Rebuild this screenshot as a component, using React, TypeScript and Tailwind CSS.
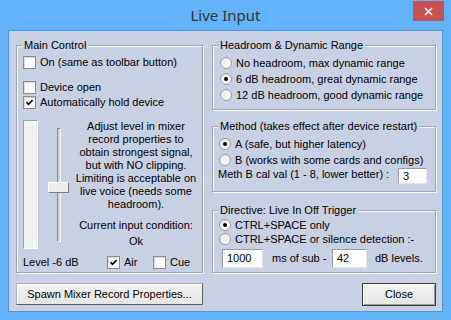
import { type ReactNode } from 'react';

function Check({ checked }: { checked?: boolean }) {
    return (
        <span className="flex h-[13px] w-[13px] shrink-0 items-center justify-center border border-[#8a8a8a] bg-white shadow-[inset_1px_1px_0_#dcdcdc]">
            {checked && (
                <svg width="9" height="9" viewBox="0 0 9 9">
                    <path d="M1.5 4.2 L3.5 6.3 L7.6 2.2" fill="none" stroke="#000" strokeWidth="1.7" />
                </svg>
            )}
        </span>
    );
}

function Radio({ selected }: { selected?: boolean }) {
    return (
        <span className="flex h-[12px] w-[12px] shrink-0 items-center justify-center rounded-full border border-[#9a9a9a] bg-gradient-to-br from-[#e6e6e6] to-white">
            {selected && <span className="h-[4px] w-[4px] rounded-full bg-black" />}
        </span>
    );
}

function Group({ title, className, children }: { title: string; className: string; children?: ReactNode }) {
    return (
        <div className={`relative border border-[#a2a6ae] shadow-[inset_1px_1px_0_#f4f6fa,1px_1px_0_#f4f6fa] ${className}`}>
            <span className="absolute -top-[8px] left-[5px] bg-[#c8d0e4] px-[2px] leading-[14px]">{title}</span>
            {children}
        </div>
    );
}

function RadioRow({ selected, label, className = '' }: { selected?: boolean; label: string; className?: string }) {
    return (
        <div className={`flex items-center gap-[4px] ${className}`}>
            <Radio selected={selected} />
            <span>{label}</span>
        </div>
    );
}

export default function App() {
    return (
        <div className="flex h-[320px] w-[451px] flex-col bg-[#62b3fa] font-['Liberation_Sans',sans-serif] text-[11px] leading-[13px] text-black">
            {/* Title bar */}
            <div className="relative flex h-[30px] items-center justify-center">
                <span className="font-['Noto_Sans',sans-serif] text-[15px] leading-[20px] text-[#333]">Live Input</span>
                <div className="absolute right-[7px] top-px flex h-[20px] w-[31px] items-center justify-center bg-[#c75050]">
                    <svg width="9" height="9" viewBox="0 0 9 9">
                        <path d="M1 1 L8 8 M8 1 L1 8" stroke="#fff" strokeWidth="1.6" />
                    </svg>
                </div>
            </div>

            {/* Client area */}
            <div className="ml-[8px] h-[282px] w-[435px] border border-[#4f94d4] bg-[#c8d0e4] pl-[7px] pt-[14px]">
                <div className="flex gap-[9px]">
                    {/* Left column */}
                    <div className="flex w-[187px] flex-col">
                        <Group title="Main Control" className="h-[228px] pl-[6px] pt-[10px]">
                            <div className="flex items-center gap-[4px]">
                                <Check />
                                <span>On (same as toolbar button)</span>
                            </div>
                            <div className="mt-[12px] flex items-center gap-[4px]">
                                <Check />
                                <span>Device open</span>
                            </div>
                            <div className="mt-[2px] flex items-center gap-[4px]">
                                <Check checked />
                                <span>Automatically hold device</span>
                            </div>

                            <div className="mt-[11px] flex">
                                <div className="h-[129px] w-[15px] border border-[#a0a0a0] border-b-white border-r-white bg-[#f0f0f0]" />
                                <div className="relative ml-[10px] h-[129px] w-[21px]">
                                    <div className="ml-[9px] mt-[8px] h-[114px] w-[4px] border-l border-t border-l-[#8a8a8a] border-t-[#8a8a8a] border-r border-b border-r-white border-b-white bg-[#d4d4d4]" />
                                    <div className="absolute left-0 top-[62px] h-[11px] w-[21px] border border-[#fff] border-b-[#7a7a7a] border-r-[#7a7a7a] bg-[#ececec]" />
                                </div>
                                <div className="ml-[3px] flex w-[128px] flex-col items-center text-center">
                                    <p>
                                        Adjust level in mixer
                                        <br />
                                        record properties to
                                        <br />
                                        obtain strongest signal,
                                        <br />
                                        but with NO clipping.
                                        <br />
                                        Limiting is acceptable on
                                        <br />
                                        live voice (needs some
                                        <br />
                                        headroom).
                                    </p>
                                    <p className="mt-[6px] leading-[16px]">
                                        Current input condition:
                                        <br />
                                        Ok
                                    </p>
                                </div>
                            </div>

                            <div className="mt-[7px] flex items-center">
                                <span className="w-[84px]">Level -6 dB</span>
                                <div className="flex w-[46px] items-center gap-[4px]">
                                    <Check checked />
                                    <span>Air</span>
                                </div>
                                <div className="flex items-center gap-[4px]">
                                    <Check />
                                    <span>Cue</span>
                                </div>
                            </div>
                        </Group>

                        <button className="mt-[10px] flex h-[22px] w-[187px] items-center justify-center border border-[#b4b4b4] border-b-[#5e5e5e] border-r-[#5e5e5e] bg-gradient-to-b from-[#f3f3f3] to-[#e6e6e6] shadow-[inset_1px_1px_0_#fff]">
                            Spawn Mixer Record Properties...
                        </button>
                    </div>

                    {/* Right column */}
                    <div className="flex w-[224px] flex-col">
                        <Group title="Headroom & Dynamic Range" className="h-[65px] pl-[7px] pt-[9px]">
                            <RadioRow label="No headroom, max dynamic range" className="h-[16px]" />
                            <RadioRow selected label="6 dB headroom, great dynamic range" className="h-[16px]" />
                            <RadioRow label="12 dB headroom, good dynamic range" className="h-[16px]" />
                        </Group>

                        <Group title="Method (takes effect after device restart)" className="mt-[16px] h-[66px] pl-[6px] pt-[9px]">
                            <RadioRow selected label="A (safe, but higher latency)" className="h-[16px]" />
                            <RadioRow label="B (works with some cards and configs)" className="h-[16px]" />
                            <div className="flex items-center">
                                <span className="-mt-[3px] ml-[-1px]">Meth B cal val (1 - 8, lower better) :</span>
                                <div className="ml-auto mr-[8px] flex h-[16px] w-[29px] items-center border border-[#9c9c9c] border-b-[#e4e4e4] border-r-[#e4e4e4] bg-white pl-[4px]">
                                    3
                                </div>
                            </div>
                        </Group>

                        <Group title="Directive: Live In Off Trigger" className="mt-[18px] h-[63px] pl-[6px] pt-[7px]">
                            <RadioRow selected label="CTRL+SPACE only" className="h-[14px]" />
                            <RadioRow label="CTRL+SPACE or silence detection :-" className="h-[14px]" />
                            <div className="mt-[3px] flex items-center">
                                <div className="ml-[3px] flex h-[19px] w-[41px] items-center border border-[#9c9c9c] border-b-[#e4e4e4] border-r-[#e4e4e4] bg-white pl-[4px]">
                                    1000
                                </div>
                                <span className="ml-[9px] w-[60px]">ms of sub -</span>
                                <div className="flex h-[19px] w-[35px] items-center border border-[#9c9c9c] border-b-[#e4e4e4] border-r-[#e4e4e4] bg-white pl-[4px]">
                                    42
                                </div>
                                <span className="ml-[8px]">dB levels.</span>
                            </div>
                        </Group>

                        <button className="ml-auto mt-[10px] flex h-[23px] w-[74px] items-center justify-center border border-[#3c3c3c] bg-gradient-to-b from-[#f3f3f3] to-[#e6e6e6] shadow-[inset_1px_1px_0_#fff,inset_-1px_-1px_0_#9a9a9a]">
                            Close
                        </button>
                    </div>
                </div>
            </div>
        </div>
    );
}
